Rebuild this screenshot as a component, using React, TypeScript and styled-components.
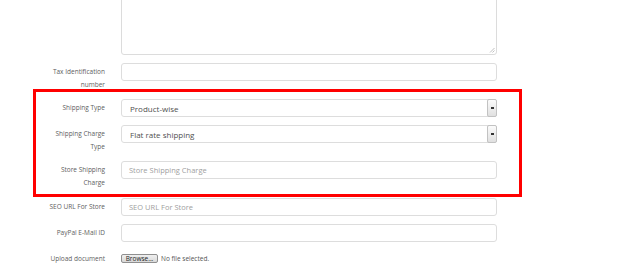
import React from "react";
import styled, { createGlobalStyle } from "styled-components";

const GlobalStyle = createGlobalStyle`
  html, body { margin: 0; padding: 0; background: #ffffff; }
  body { width: 628px; height: 266px; overflow: hidden; font-family: "Open Sans", "Liberation Sans", sans-serif; }
`;

const Page = styled.div`
  position: relative;
  width: 628px;
  height: 266px;
  overflow: hidden;
`;

const Form = styled.div`
  display: flex;
  flex-direction: column;
  margin-top: -20px;
`;

const Row = styled.div<{ $gap?: number }>`
  display: grid;
  grid-template-columns: 105px 376px;
  column-gap: 16px;
  align-items: start;
  margin-bottom: ${(p) => (p.$gap ?? 8)}px;
`;

const Label = styled.div`
  text-align: right;
  font-size: 6.5px;
  line-height: 12.6px;
  padding-top: 3px;
  color: #606060;
`;

const TextArea = styled.div`
  box-sizing: border-box;
  height: 75px;
  border: 1px solid #dcdcdc;
  border-radius: 3px;
  position: relative;
`;

const Grip = styled.svg`
  position: absolute;
  right: 1px;
  bottom: 1px;
`;

const Input = styled.div<{ $placeholder?: boolean }>`
  box-sizing: border-box;
  height: 18px;
  border: 1px solid #dddddd;
  border-radius: 3px;
  display: flex;
  align-items: center;
  padding-left: 7px;
  font-size: 7.5px;
  color: ${(p) => (p.$placeholder ? "#a0a0a0" : "#444")};
`;

const Select = styled.div`
  box-sizing: border-box;
  height: 18px;
  border: 1px solid #dddddd;
  border-radius: 3px;
  display: flex;
  align-items: center;
  font-size: 8px;
  color: #505050;
`;

const SelectText = styled.span`
  flex: 1;
  padding-left: 8px;
`;

const ArrowButton = styled.div`
  box-sizing: border-box;
  width: 10px;
  height: 18px;
  margin: -1px -1px -1px 0;
  border: 1px solid #c2c2c2;
  border-radius: 2px;
  background: linear-gradient(#fbfbfb, #e0e0e0);
  display: flex;
  align-items: center;
  justify-content: center;
`;

const Arrow = styled.div`
  width: 3px;
  height: 1.5px;
  background: #333;
`;

const FileRow = styled.div`
  display: flex;
  align-items: center;
  gap: 3px;
  height: 18px;
  font-size: 6.5px;
  color: #555;
`;

const BrowseButton = styled.div`
  box-sizing: border-box;
  width: 37px;
  height: 9px;
  border: 1px solid #8f8f8f;
  border-radius: 2px;
  background: linear-gradient(#f0f0f0, #d8d8d8);
  display: flex;
  align-items: center;
  justify-content: center;
  font-size: 6.5px;
  color: #222;
`;

const Highlight = styled.div`
  position: absolute;
  left: 33px;
  top: 89px;
  width: 489px;
  height: 108px;
  box-sizing: border-box;
  border: 3px solid #ff0000;
  pointer-events: none;
`;

const SelectBox = ({ value }: { value: string }) => (
  <Select>
    <SelectText>{value}</SelectText>
    <ArrowButton>
      <Arrow />
    </ArrowButton>
  </Select>
);

export default function App() {
  return (
    <Page>
      <GlobalStyle />
      <Form>
        <Row>
          <div />
          <TextArea>
            <Grip width="6" height="6" viewBox="0 0 6 6">
              <path d="M5.5 1 L1 5.5 M5.5 3.5 L3.5 5.5" stroke="#b0b0b0" strokeWidth="0.8" />
            </Grip>
          </TextArea>
        </Row>
        <Row>
          <Label>
            Tax Identification
            <br />
            number
          </Label>
          <Input />
        </Row>
        <Row>
          <Label>Shipping Type</Label>
          <SelectBox value="Product-wise" />
        </Row>
        <Row>
          <Label>
            Shipping Charge
            <br />
            Type
          </Label>
          <SelectBox value="Flat rate shipping" />
        </Row>
        <Row>
          <Label>
            Store Shipping
            <br />
            Charge
          </Label>
          <Input $placeholder>Store Shipping Charge</Input>
        </Row>
        <Row>
          <Label>SEO URL For Store</Label>
          <Input $placeholder>SEO URL For Store</Input>
        </Row>
        <Row>
          <Label>PayPal E-Mail ID</Label>
          <Input />
        </Row>
        <Row>
          <Label>Upload document</Label>
          <FileRow>
            <BrowseButton>Browse...</BrowseButton>
            <span>No file selected.</span>
          </FileRow>
        </Row>
      </Form>
      <Highlight />
    </Page>
  );
}
